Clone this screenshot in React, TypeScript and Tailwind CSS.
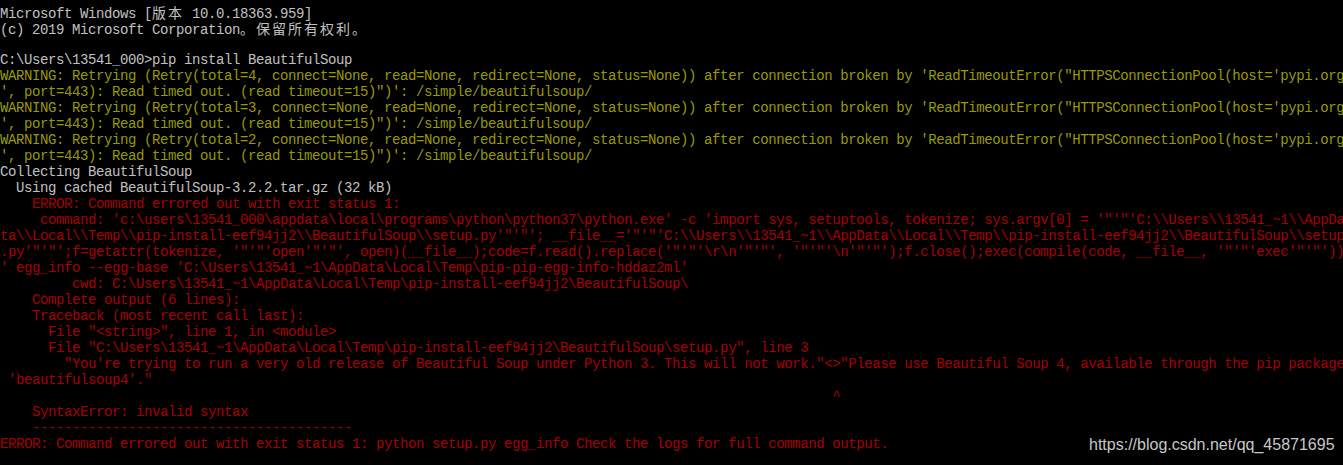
import type { ReactNode } from "react";

const GRAY = "text-[#c0c0c0]";
const YELLOW = "text-[#9a9a00]";
const RED = "text-[#a80000]";

// wide chars take two console cells (16px)
function Wide({ children }: { children: ReactNode }) {
  return (
    <span className="inline-block font-['Noto_Sans_CJK_SC',sans-serif] leading-4 tracking-[2px]">
      {children}
    </span>
  );
}

const warn = (n: number): [string, string][] => [
  [
    YELLOW,
    `WARNING: Retrying (Retry(total=${n}, connect=None, read=None, redirect=None, status=None)) after connection broken by 'ReadTimeoutError("HTTPSConnectionPool(host='pypi.org`,
  ],
  [YELLOW, `', port=443): Read timed out. (read timeout=15)")': /simple/beautifulsoup/`],
];

const lines: [string, string][] = [
  [GRAY, "C:\\Users\\13541_000>pip install BeautifulSoup"],
  ...warn(4),
  ...warn(3),
  ...warn(2),
  [GRAY, "Collecting BeautifulSoup"],
  [GRAY, "  Using cached BeautifulSoup-3.2.2.tar.gz (32 kB)"],
  [RED, "    ERROR: Command errored out with exit status 1:"],
  [
    RED,
    `     command: 'c:\\users\\13541_000\\appdata\\local\\programs\\python\\python37\\python.exe' -c 'import sys, setuptools, tokenize; sys.argv[0] = '"'"'C:\\\\Users\\\\13541_~1\\\\AppDa`,
  ],
  [
    RED,
    `ta\\\\Local\\\\Temp\\\\pip-install-eef94jj2\\\\BeautifulSoup\\\\setup.py'"'"'; __file__='"'"'C:\\\\Users\\\\13541_~1\\\\AppData\\\\Local\\\\Temp\\\\pip-install-eef94jj2\\\\BeautifulSoup\\\\setup`,
  ],
  [
    RED,
    `.py'"'"';f=getattr(tokenize, '"'"'open'"'"', open)(__file__);code=f.read().replace('"'"'\\r\\n'"'"', '"'"'\\n'"'"');f.close();exec(compile(code, __file__, '"'"'exec'"'"'))`,
  ],
  [RED, `' egg_info --egg-base 'C:\\Users\\13541_~1\\AppData\\Local\\Temp\\pip-pip-egg-info-hddaz2ml'`],
  [RED, "         cwd: C:\\Users\\13541_~1\\AppData\\Local\\Temp\\pip-install-eef94jj2\\BeautifulSoup\\"],
  [RED, "    Complete output (6 lines):"],
  [RED, "    Traceback (most recent call last):"],
  [RED, `      File "<string>", line 1, in <module>`],
  [RED, `      File "C:\\Users\\13541_~1\\AppData\\Local\\Temp\\pip-install-eef94jj2\\BeautifulSoup\\setup.py", line 3`],
  [
    RED,
    `        "You're trying to run a very old release of Beautiful Soup under Python 3. This will not work."<>"Please use Beautiful Soup 4, available through the pip package`,
  ],
  [RED, ` 'beautifulsoup4'."`],
  [RED, " ".repeat(104) + "^"],
  [RED, "    SyntaxError: invalid syntax"],
  [RED, "    " + "-".repeat(40)],
  [RED, "ERROR: Command errored out with exit status 1: python setup.py egg_info Check the logs for full command output."],
];

export default function App() {
  return (
    <div className="relative h-[465px] w-full overflow-hidden bg-black pt-1 font-['Liberation_Mono','Noto_Sans_CJK_SC',monospace] text-[14px] tracking-[-0.4px]">
      <div className={`h-4 leading-4 whitespace-pre ${GRAY}`}>
        Microsoft Windows [<Wide>版本</Wide> 10.0.18363.959]
      </div>
      <div className={`h-4 leading-4 whitespace-pre ${GRAY}`}>
        (c) 2019 Microsoft Corporation<Wide>。保留所有权利。</Wide>
      </div>
      <div className="h-4" />
      {lines.map(([color, text], i) => (
        <div key={i} className={`h-4 leading-4 whitespace-pre ${color}`}>
          {text}
        </div>
      ))}

      {/* watermark */}
      <div className="absolute left-[1089px] top-[435px] font-['Liberation_Sans',Arial,sans-serif] text-[16px] leading-5 tracking-normal text-[#c8c8c8]">
        https://blog.csdn.net/qq_45871695
      </div>
    </div>
  );
}
